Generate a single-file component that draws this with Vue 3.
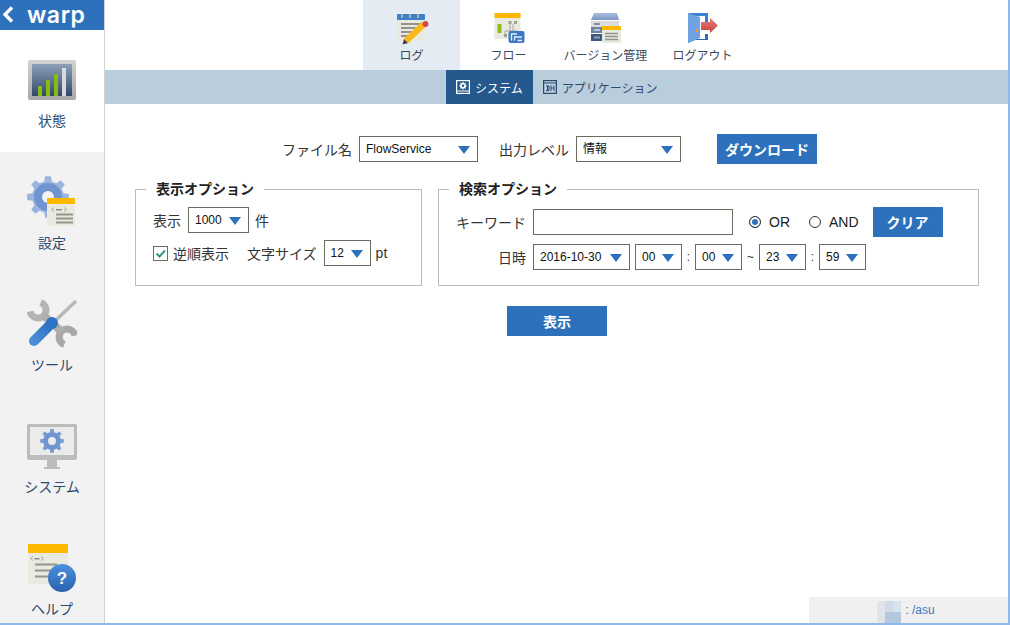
<script setup>
import { ref } from 'vue'

const gear = (cx, cy, r, tooth, n = 8) => {
  let d = ''
  const step = (Math.PI * 2) / n
  for (let i = 0; i < n; i++) {
    const a = i * step
    const pts = [
      [a - step * 0.3, r],
      [a - step * 0.18, r + tooth],
      [a + step * 0.18, r + tooth],
      [a + step * 0.3, r]
    ]
    pts.forEach(([t, l], j) => {
      const x = (cx + Math.cos(t) * l).toFixed(2)
      const y = (cy + Math.sin(t) * l).toFixed(2)
      d += `${i === 0 && j === 0 ? 'M' : 'L'}${x} ${y} `
    })
  }
  return d + 'Z'
}

const pixels = ['#e0e3ea', '#cfdbe7', '#d8e2ec', '#e0e3ea', '#b3c7de', '#b3c7de']

const keyword = ref('')
const reversed = ref(true)
const mode = ref('OR')
</script>

<template>
  <div class="page">
    <aside class="side">
      <div class="logo">
        <svg width="16" height="30" viewBox="0 0 16 30"><path d="M12 7.500 5 14.500 12 21.500" fill="none" stroke="#fff" stroke-width="3.400"/></svg>
        <span>warp</span>
      </div>
      <div class="side-item on">
        <svg width="50" height="56" viewBox="0 0 50 56">
          <defs>
            <linearGradient id="screen" x1="0" y1="0" x2="0" y2="1"><stop offset="0" stop-color="#8ea1ba"/><stop offset="1" stop-color="#32476a"/></linearGradient>
            <linearGradient id="frame" x1="0" y1="0" x2="0" y2="1"><stop offset="0" stop-color="#d2d2d2"/><stop offset="1" stop-color="#a8a8a8"/></linearGradient>
          </defs>
          <rect x="1" y="8" width="48" height="40" rx="2" fill="url(#frame)"/>
          <rect x="5" y="12" width="40" height="32" fill="url(#screen)"/>
          <rect x="11" y="34" width="4" height="10" fill="#86bc10"/>
          <rect x="19" y="28" width="4" height="16" fill="#86bc10"/>
          <rect x="27" y="22" width="4" height="22" fill="#86bc10"/>
          <rect x="35" y="16" width="4" height="28" fill="#d9d9d9"/>
        </svg>
        <span>状態</span>
      </div>
      <div class="side-item">
        <svg width="50" height="56" viewBox="0 0 50 56">
          <path :d="gear(21, 23, 16, 5)" fill="#9ab4de"/>
          <circle cx="21" cy="23" r="14" fill="#6f94cf"/>
          <circle cx="21" cy="23" r="6" fill="#f2f2f2"/>
          <rect x="20" y="24" width="28" height="28" fill="#e9e9df"/>
          <rect x="20" y="24" width="28" height="6" fill="#fdb900"/>
          <path d="M27 33.500 24.500 35.500 27 37.500M37 33.500 39.500 35.500 37 37.500" fill="none" stroke="#a5a59d"/>
          <rect x="29" y="35" width="6" height="1.500" fill="#8f8f87"/>
          <path d="M29 40.500H46M29 44.500H46M29 48.500H46" stroke="#94948c" stroke-width="1.800"/>
        </svg>
        <span>設定</span>
      </div>
      <div class="side-item">
        <svg width="50" height="56" viewBox="0 0 50 56">
          <defs>
            <linearGradient id="handle" x1="1" y1="0" x2="0" y2="1"><stop offset="0" stop-color="#2f73c4"/><stop offset="1" stop-color="#4a8dd8"/></linearGradient>
          </defs>
          <path d="M13.700 6.500A8 8 0 1 1 3.100 15.400" fill="none" stroke="#b4b4b4" stroke-width="7"/>
          <path d="M48 39.600A8 8 0 1 0 37.300 48.500" fill="none" stroke="#a8a8a8" stroke-width="7"/>
          <path d="M16 19 35 36" stroke="#aeaeae" stroke-width="8"/>
          <path d="M49 5 28 25" stroke="#b8b8b8" stroke-width="3.500"/>
          <path d="M22 30 7 45" stroke="url(#handle)" stroke-width="10" stroke-linecap="round"/>
          <circle cx="25" cy="27" r="6" fill="#2f73c4"/>
        </svg>
        <span>ツール</span>
      </div>
      <div class="side-item">
        <svg width="50" height="56" viewBox="0 0 50 56">
          <rect x="0" y="6" width="50" height="36" rx="2" fill="#bcbcbc"/>
          <rect x="3" y="9" width="44" height="28" fill="#ebebeb"/>
          <rect x="20" y="42" width="10" height="8" fill="#bcbcbc"/>
          <rect x="17" y="49" width="16" height="2" fill="#bcbcbc"/>
          <path :d="gear(25, 23, 9, 3)" fill="#7b9dd3"/>
          <circle cx="25" cy="23" r="8.500" fill="#6f94cf"/>
          <circle cx="25" cy="23" r="4" fill="#ebebeb"/>
        </svg>
        <span>システム</span>
      </div>
      <div class="side-item">
        <svg width="50" height="56" viewBox="0 0 50 56">
          <defs>
            <linearGradient id="help" x1="0" y1="0" x2="0" y2="1"><stop offset="0" stop-color="#4c90de"/><stop offset="1" stop-color="#2a62ad"/></linearGradient>
          </defs>
          <rect x="1" y="4" width="40" height="40" fill="#e9e9df"/>
          <rect x="1" y="4" width="40" height="9" fill="#fdb900"/>
          <path d="M6 16.500 3.500 18.500 6 20.500M14 16.500 16.500 18.500 14 20.500" fill="none" stroke="#a5a59d"/>
          <rect x="7.500" y="18" width="5" height="1.500" fill="#8f8f87"/>
          <path d="M8 24.500H30M8 30.500H28M8 36.500H24" stroke="#94948c" stroke-width="2"/>
          <circle cx="35" cy="38" r="14" fill="url(#help)"/>
          <text x="35" y="44" text-anchor="middle" class="q">?</text>
        </svg>
        <span>ヘルプ</span>
      </div>
    </aside>

    <div class="main">
      <nav class="top">
        <a class="tab on">
          <svg width="40" height="36" viewBox="0 0 40 36">
            <rect x="5" y="4" width="28" height="27" rx="1" fill="#e9e9df"/>
            <rect x="5" y="4" width="28" height="6" rx="1" fill="#3d80d0"/>
            <path d="M10 4V8M18 4V8M26 4V8" stroke="#b3aca0" stroke-width="2"/>
            <path d="M9 14H28M9 18H28M9 22H24M9 26H20" stroke="#94948c" stroke-width="1.800"/>
            <path d="M14 31 32 14" stroke="#f9b91c" stroke-width="6.500"/>
            <path d="M10.500 34.500 12 29 16 33Z" fill="#444"/>
            <circle cx="33.500" cy="14" r="3" fill="#d0484c"/>
          </svg>
          <span>ログ</span>
        </a>
        <a class="tab">
          <svg width="40" height="36" viewBox="0 0 40 36">
            <rect x="5.500" y="3" width="26" height="26" fill="#e9e9df"/>
            <rect x="5.500" y="3" width="26" height="5" fill="#fdb900"/>
            <rect x="8.500" y="14" width="4" height="9" fill="#8fbb12"/>
            <path d="M21 14V21M16 21H28M16 21V25M24 14V21" stroke="#a8a8a0" stroke-width="1"/>
            <rect x="19.500" y="11" width="3" height="3" fill="#a0a098"/>
            <rect x="25" y="11" width="3" height="3" fill="#a0a098"/>
            <rect x="15" y="24" width="3" height="3" fill="#a0a098"/>
            <rect x="19.500" y="21" width="16" height="12" rx="2" fill="#3c79c4"/>
            <path d="M22.500 30.500V24H28M25.500 30.500V27H33M28.500 30.500H33" fill="none" stroke="#e6eefa" stroke-width="1.300"/>
          </svg>
          <span>フロー</span>
        </a>
        <a class="tab">
          <svg width="40" height="36" viewBox="0 0 40 36">
            <defs>
              <linearGradient id="srv" x1="0" y1="0" x2="0" y2="1"><stop offset="0" stop-color="#a9bee0"/><stop offset="1" stop-color="#7d96bf"/></linearGradient>
            </defs>
            <path d="M8 3H31L33 10H5Z" fill="url(#srv)"/>
            <rect x="5" y="11" width="28" height="6" fill="#dcdcdc"/>
            <rect x="5" y="17" width="28" height="6" fill="#6f83a0"/>
            <rect x="5" y="24" width="28" height="7" fill="#40587c"/>
            <rect x="8" y="13" width="6" height="2" fill="#7e8ea8"/>
            <rect x="8" y="19" width="6" height="2" fill="#b6c4d6"/>
            <rect x="8" y="26.500" width="6" height="2" fill="#8ea2bf"/>
            <rect x="16" y="16" width="19" height="17" rx="1" fill="#e9e9df"/>
            <rect x="16" y="16" width="19" height="4" fill="#fdb900"/>
            <path d="M19 23.500H32M19 26.500H32M19 29.500H32" stroke="#94948c" stroke-width="1.500"/>
          </svg>
          <span>バージョン管理</span>
        </a>
        <a class="tab">
          <svg width="40" height="36" viewBox="0 0 40 36">
            <defs>
              <linearGradient id="door" x1="0" y1="0" x2="0" y2="1"><stop offset="0" stop-color="#3f82d2"/><stop offset="1" stop-color="#2a65b3"/></linearGradient>
              <linearGradient id="arrow" x1="0" y1="0" x2="0" y2="1"><stop offset="0" stop-color="#e87f7c"/><stop offset="1" stop-color="#c7403e"/></linearGradient>
            </defs>
            <path d="M5 3H25V12H22V6H11V29H22V24H25V30H12L5 33Z" fill="url(#door)"/>
            <path d="M5 3 17 7V28L5 33Z" fill="#6ea2e0"/>
            <rect x="13" y="19" width="2" height="3" fill="#f0a020"/>
            <path d="M18 12H27V8L35 15.500 27 23V20H18Z" fill="url(#arrow)"/>
          </svg>
          <span>ログアウト</span>
        </a>
      </nav>

      <div class="sub">
        <a class="sub-item on">
          <svg width="14" height="14" viewBox="0 0 14 14">
            <rect x=".6" y=".6" width="12.800" height="12.800" fill="none" stroke="#fff" stroke-width="1.200"/>
            <path d="M0 11H14" stroke="#fff" stroke-width="1"/>
            <path :d="gear(7, 5.800, 2.800, 1, 8)" fill="#fff"/>
            <circle cx="7" cy="5.800" r="1.200" fill="#25588c"/>
          </svg>
          システム
        </a>
        <a class="sub-item">
          <svg width="14" height="14" viewBox="0 0 14 14">
            <rect x=".6" y=".6" width="12.800" height="12.800" fill="none" stroke="#2c4a70" stroke-width="1.200"/>
            <path d="M0 3H14M3 6H6V10.500H3M4.500 6V10.500M8 5.500V11M8 8H11M11 5.500V11" fill="none" stroke="#2c4a70"/>
          </svg>
          アプリケーション
        </a>
      </div>

      <div class="file-row">
        <label class="label">ファイル名</label>
        <div class="pick w119">
          <select><option>FlowService</option></select>
        </div>
        <label class="label level">出力レベル</label>
        <div class="pick w105">
          <select><option>情報</option></select>
        </div>
        <button class="btn dl">ダウンロード</button>
      </div>

      <div class="panels">
        <fieldset class="panel view">
          <legend>表示オプション</legend>
          <div class="line">
            <span class="txt">表示</span>
            <div class="pick w61 ml7"><select><option>1000</option></select></div>
            <span class="txt ml6">件</span>
          </div>
          <div class="line">
            <span class="check" @click="reversed = !reversed">
              <svg v-if="reversed" width="13" height="13" viewBox="0 0 13 13"><path d="M2.500 6.500 5.500 9.500 11 3.500" fill="none" stroke="#2f9a78" stroke-width="2"/></svg>
            </span>
            <span class="txt ml5">逆順表示</span>
            <span class="txt ml18">文字サイズ</span>
            <div class="pick w47 ml7"><select><option>12</option></select></div>
            <span class="txt ml5">pt</span>
          </div>
        </fieldset>

        <fieldset class="panel search">
          <legend>検索オプション</legend>
          <div class="line">
            <span class="txt key">キーワード</span>
            <input v-model="keyword" class="kw" type="text" />
            <span class="radio first" :class="{ sel: mode === 'OR' }" @click="mode = 'OR'"></span>
            <span class="txt opt">OR</span>
            <span class="radio second" :class="{ sel: mode === 'AND' }" @click="mode = 'AND'"></span>
            <span class="txt opt">AND</span>
            <button class="btn clear">クリア</button>
          </div>
          <div class="line">
            <span class="txt key">日時</span>
            <div class="pick w97"><select><option>2016-10-30</option></select></div>
            <div class="pick w47 ml5"><select><option>00</option></select></div>
            <span class="sep c">:</span>
            <div class="pick w47"><select><option>00</option></select></div>
            <span class="sep t">~</span>
            <div class="pick w47"><select><option>23</option></select></div>
            <span class="sep c">:</span>
            <div class="pick w47"><select><option>59</option></select></div>
          </div>
        </fieldset>
      </div>

      <button class="btn show">表示</button>

      <div class="status">
        <span class="mosaic"><i v-for="(p, i) in pixels" :key="i" :style="{ background: p }"></i></span>
        <span class="user">: /asu</span>
      </div>
    </div>
  </div>
</template>

<style scoped>
.page {
  width: 1010px;
  height: 625px;
  box-sizing: border-box;
  display: flex;
  overflow: hidden;
  background: #fff;
  border-right: 2px solid #8fb9e8;
  border-bottom: 2px solid #8fb9e8;
  font-family: "Liberation Sans", "Noto Sans CJK JP", sans-serif;
  color: #222;
}

.side {
  width: 105px;
  flex: none;
  box-sizing: border-box;
  background: #f2f2f2;
  border-right: 1px solid #d2d2d2;
  overflow: hidden;
}
.logo {
  height: 30px;
  background: #2d71bd;
  margin-right: -1px;
  display: flex;
  align-items: center;
  color: #fff;
}
.logo span {
  margin-left: 11px;
  font-family: "Inter", sans-serif;
  font-weight: 600;
  font-size: 23px;
  line-height: 28px;
  letter-spacing: 0.6px;
}
.side-item {
  height: 122px;
  box-sizing: border-box;
  padding-top: 22px;
  display: flex;
  flex-direction: column;
  align-items: center;
  color: #2c4a70;
  font-size: 14px;
  line-height: 20px;
}
.side-item.on {
  background: #fff;
}
.side-item svg {
  display: block;
  margin-bottom: 3px;
}
.q {
  font: bold 17px "Liberation Sans", sans-serif;
  fill: #fff;
}

.main {
  flex: 1;
  min-width: 0;
  display: flex;
  flex-direction: column;
}

.top {
  height: 70px;
  padding-left: 258px;
  display: flex;
}
.tab {
  width: 97px;
  padding-top: 10px;
  box-sizing: border-box;
  display: flex;
  flex-direction: column;
  align-items: center;
  font-size: 12px;
  line-height: 16px;
  color: #3a4a5f;
  white-space: nowrap;
}
.tab svg {
  display: block;
  margin-bottom: 2px;
}
.tab.on {
  background: #e4ebf3;
}

.sub {
  height: 34px;
  background: #b9cddd;
  padding-left: 341px;
  display: flex;
}
.sub-item {
  display: flex;
  align-items: center;
  gap: 5px;
  padding: 0 10px;
  font-size: 12px;
  color: #2c4a70;
}
.sub-item.on {
  background: #25588c;
  color: #fff;
}

.file-row {
  margin-top: 30px;
  height: 30px;
  padding-left: 177px;
  display: flex;
  align-items: center;
}
.label {
  font-size: 14px;
  margin-right: 7px;
  color: #333;
}
.level {
  margin-left: 21px;
}

.pick {
  position: relative;
  height: 26px;
  flex: none;
}
.pick select {
  appearance: none;
  width: 100%;
  height: 100%;
  box-sizing: border-box;
  border: 1px solid #6b6b60;
  border-radius: 0;
  background: #fff;
  padding: 0 0 0 6px;
  font-family: inherit;
  font-size: 12px;
  color: #111;
  outline: none;
}
.pick::after {
  content: "";
  position: absolute;
  right: 8px;
  top: 10px;
  border-left: 6px solid transparent;
  border-right: 6px solid transparent;
  border-top: 8px solid #2d71bd;
  pointer-events: none;
}
.w119 { width: 119px; }
.w105 { width: 105px; }
.w97 { width: 97px; }
.w61 { width: 61px; }
.w47 { width: 47px; }
.ml5 { margin-left: 5px; }
.ml6 { margin-left: 6px; }
.ml7 { margin-left: 7px; }
.ml18 { margin-left: 18px; }

.btn {
  border: 0;
  padding: 0;
  background: #2d71bd;
  color: #fff;
  font-family: inherit;
  font-size: 14px;
  font-weight: 700;
  height: 30px;
  flex: none;
}
.dl {
  width: 100px;
  margin-left: 36px;
}
.clear {
  width: 70px;
  margin-left: 14px;
}
.show {
  width: 100px;
  margin: 20px 0 0 402px;
}

.panels {
  margin: 15px 0 0 30px;
  display: flex;
  gap: 16px;
}
.panel {
  margin: 0;
  height: 107px;
  box-sizing: border-box;
  border: 1px solid #bdbdbd;
  padding: 8px 0 0 17px;
  min-width: 0;
  display: flex;
  flex-direction: column;
}
.panel legend {
  margin-left: -7px;
  padding: 0 10px;
  font-size: 14px;
  line-height: 20px;
  font-weight: 700;
  color: #222;
}
.view {
  width: 287px;
  gap: 7px;
}
.search {
  width: 541px;
  padding-top: 10px;
  gap: 9px;
}
.line {
  height: 26px;
  display: flex;
  align-items: center;
}
.txt {
  font-size: 14px;
  color: #333;
  white-space: nowrap;
}
.key {
  width: 70px;
  margin-right: 7px;
  text-align: right;
}
.kw {
  width: 200px;
  height: 26px;
  box-sizing: border-box;
  border: 1px solid #6b6b60;
  border-radius: 0;
  padding: 0 5px;
  outline: none;
  flex: none;
}
.check {
  width: 15px;
  height: 15px;
  box-sizing: border-box;
  border: 1px solid #6b6b60;
  display: flex;
  align-items: center;
  justify-content: center;
  flex: none;
}
.radio {
  width: 12px;
  height: 12px;
  box-sizing: border-box;
  border: 1px solid #333;
  border-radius: 50%;
  background: #fff;
  flex: none;
  margin-right: 8px;
}
.radio.sel {
  background: #2d71bd;
  box-shadow: inset 0 0 0 2px #fff;
}
.first { margin-left: 16px; }
.second { margin-left: 19px; }
.opt { color: #222; }
.sep {
  text-align: center;
  font-size: 12px;
  color: #333;
  flex: none;
}
.c { width: 13px; }
.t { width: 17px; }

.status {
  margin-top: auto;
  align-self: flex-end;
  width: 199px;
  height: 26px;
  background: #f0f0f0;
  display: flex;
  justify-content: center;
  align-items: flex-end;
  gap: 4px;
  padding-right: 5px;
  box-sizing: border-box;
}
.mosaic {
  width: 24px;
  height: 22px;
  display: grid;
  grid-template-columns: repeat(3, 8px);
  grid-template-rows: repeat(2, 11px);
}
.user {
  font-size: 12px;
  line-height: 26px;
  color: #3a78c4;
}
</style>
